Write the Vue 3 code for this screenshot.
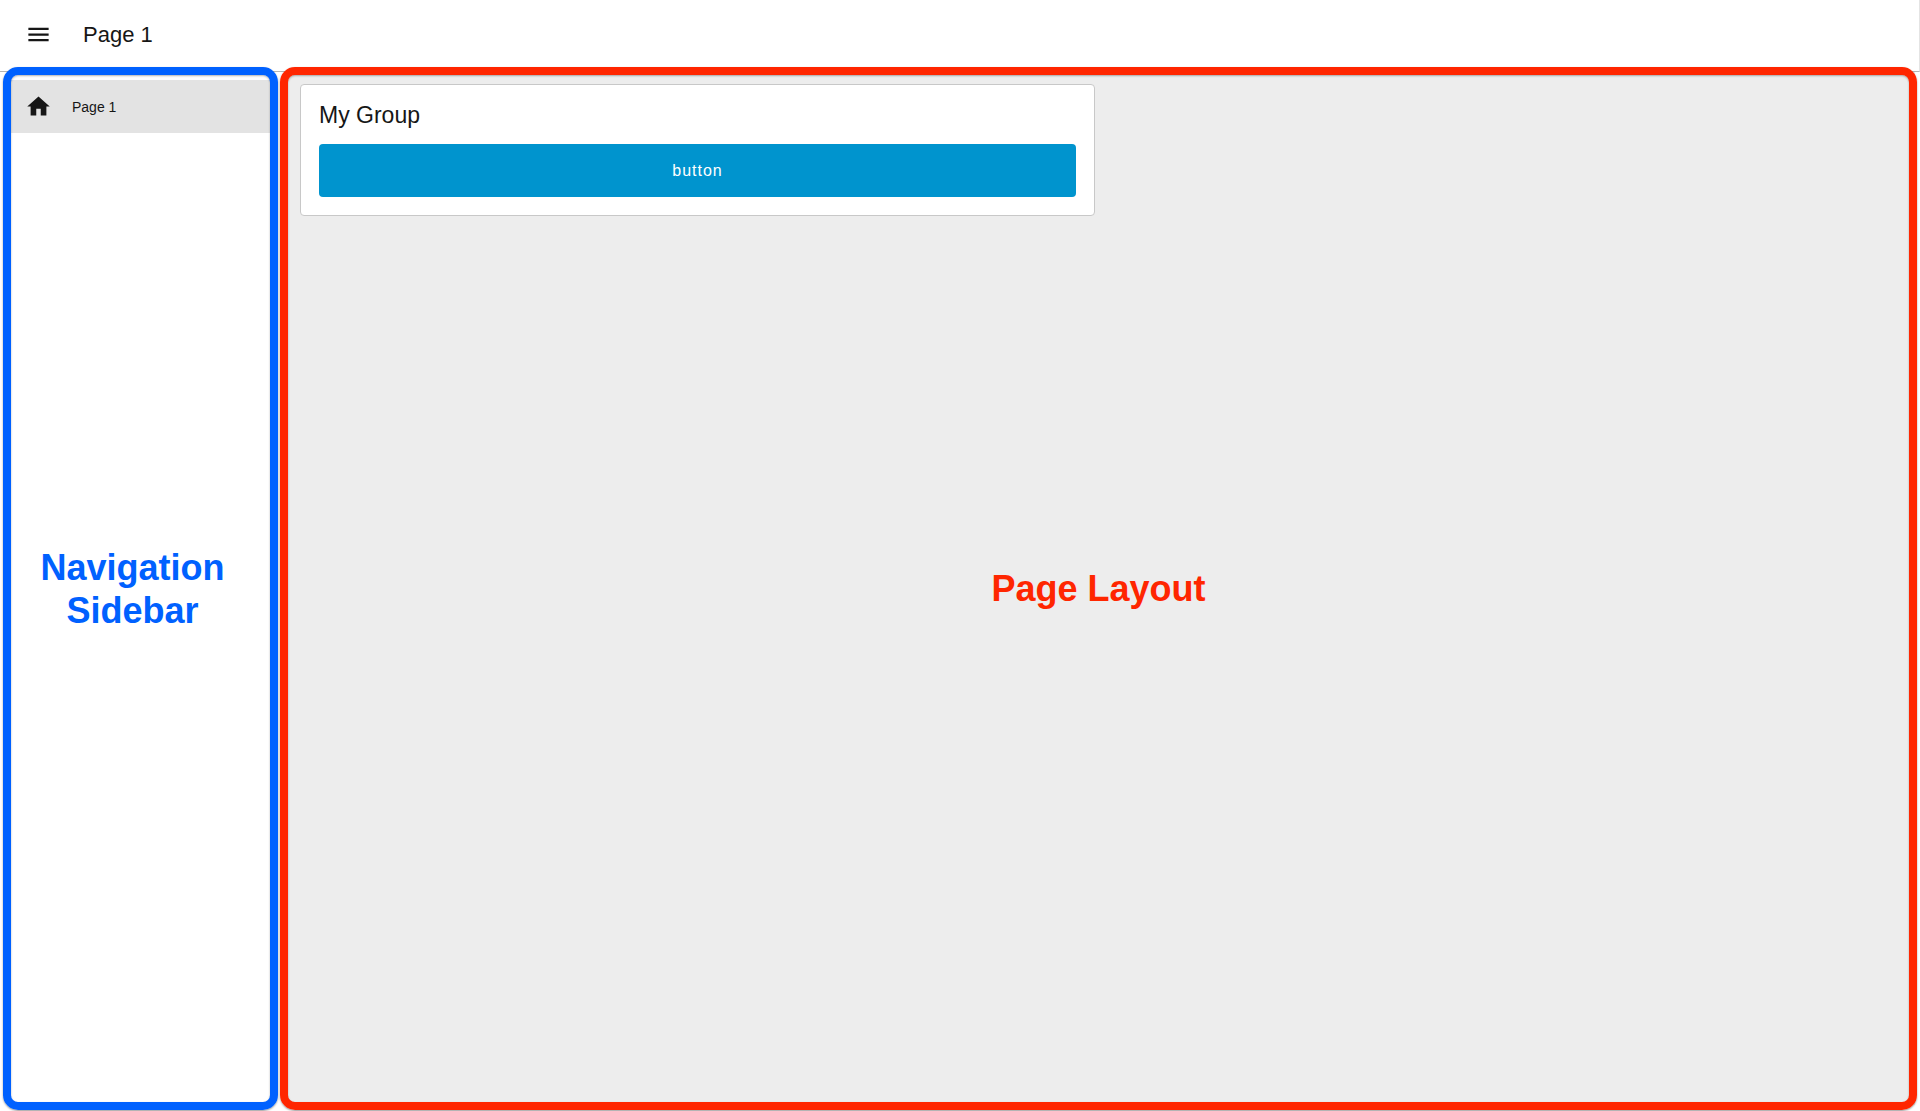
<script setup>
import { ref } from 'vue'

const sidebarOpen = ref(true)
const pages = [{ name: 'Page 1', active: true }]
</script>

<template>
  <div class="app">
    <header class="bar">
      <button class="menu" type="button" aria-label="Toggle navigation" @click="sidebarOpen = !sidebarOpen">
        <svg viewBox="0 0 24 24" width="27" height="27" aria-hidden="true">
          <path d="M3 6h18v2H3V6m0 5h18v2H3v-2m0 5h18v2H3v-2Z" />
        </svg>
      </button>
      <h1 class="title">Page 1</h1>
    </header>
    <div class="body">
      <aside v-if="sidebarOpen" class="sidebar">
        <nav>
          <a v-for="page in pages" :key="page.name" href="#" class="item" :class="{ active: page.active }">
            <svg viewBox="0 0 24 24" width="27" height="27" aria-hidden="true">
              <path d="M10 20v-6h4v6h5v-8h3L12 3 2 12h3v8h5Z" />
            </svg>
            <span>{{ page.name }}</span>
          </a>
        </nav>
        <div class="frame frame-nav"><span>Navigation<br />Sidebar</span></div>
      </aside>
      <main class="page">
        <section class="group">
          <h2 class="group-title">My Group</h2>
          <button class="action" type="button">button</button>
        </section>
        <div class="frame frame-page"><span>Page Layout</span></div>
      </main>
    </div>
  </div>
</template>

<style>
body {
  margin: 0;
}
</style>

<style scoped>
.app {
  display: flex;
  flex-direction: column;
  min-height: 100vh;
  background: #fff;
  color: #161616;
  font-family: "Liberation Sans", Arial, sans-serif;
}

.bar {
  box-sizing: border-box;
  display: flex;
  align-items: center;
  gap: 31px;
  height: 72px;
  padding: 0 25px 2px;
  border-bottom: 1px solid #b4b4b4;
  border-right: 1px solid #e4e4e4;
}

.menu {
  display: flex;
  padding: 0;
  border: 0;
  background: none;
  color: inherit;
  cursor: pointer;
}

svg {
  display: block;
  fill: currentColor;
}

.title,
.group-title {
  margin: 0;
  font-size: 22px;
  line-height: 28px;
  font-weight: 400;
}

.group-title {
  font-size: 23px;
}

.body {
  display: flex;
  flex: 1;
}

.sidebar {
  position: relative;
  box-sizing: border-box;
  width: 279px;
  padding: 8px 8px 0;
}

.item {
  display: flex;
  align-items: center;
  gap: 20px;
  height: 53px;
  padding: 0 17px;
  color: inherit;
  font-size: 14px;
  text-decoration: none;
}

.item.active {
  background: #e3e3e3;
}

.page {
  position: relative;
  flex: 1;
  padding: 12px 30px 12px 21px;
  background: linear-gradient(#ededed, #ededed) 5px 0 / calc(100% - 10px) calc(100% - 6px) no-repeat;
}

.group {
  box-sizing: border-box;
  width: 50%;
  padding: 16px 18px 18px;
  border: 1px solid #c8c8c8;
  border-radius: 4px;
  background: #fff;
}

.action {
  display: block;
  width: 100%;
  height: 53px;
  margin-top: 15px;
  border: 0;
  border-radius: 4px;
  background: #0094ce;
  color: #fff;
  font-family: inherit;
  font-size: 16px;
  letter-spacing: 1px;
  cursor: pointer;
}

/* Annotation frames drawn over the two regions */
.frame {
  position: absolute;
  display: flex;
  align-items: center;
  justify-content: center;
  border: 8px solid;
  border-radius: 15px;
  box-shadow: 0 1px 2px rgba(0, 0, 0, 0.4), inset 0 1px 2px rgba(0, 0, 0, 0.3);
  font-size: 36px;
  line-height: 43px;
  font-weight: 700;
  text-align: center;
  pointer-events: none;
}

.frame-nav {
  inset: -5px 1px 1px 3px;
  padding-right: 16px;
  color: #0061ff;
}

.frame-page {
  inset: -5px 3px 1px 1px;
  color: #ff2600;
}
</style>
